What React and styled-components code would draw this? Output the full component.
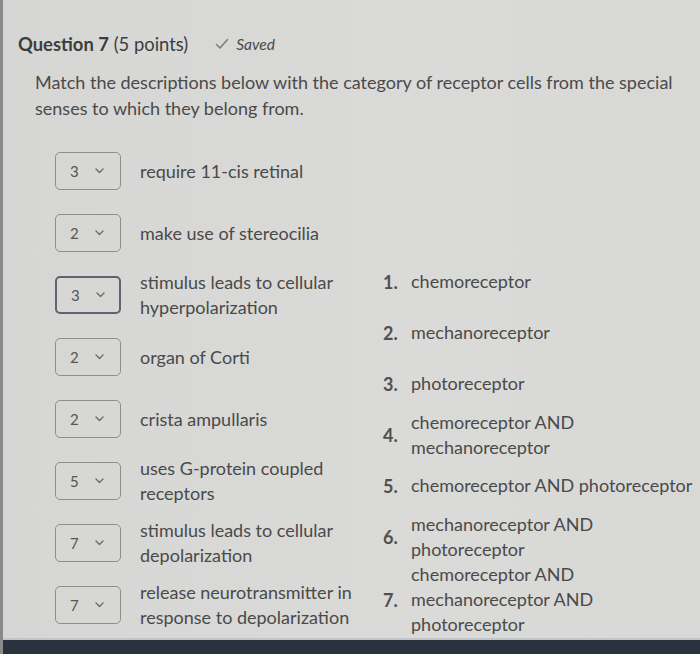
import React from "react";
import styled, { createGlobalStyle } from "styled-components";

const GlobalStyle = createGlobalStyle`
  html, body {
    margin: 0;
    padding: 0;
    background: #d7d7d5;
  }
  * { box-sizing: border-box; }
`;

const rows = [
  { value: "3", text: "require 11-cis retinal" },
  { value: "2", text: "make use of stereocilia" },
  { value: "3", text: "stimulus leads to cellular hyperpolarization", focused: true },
  { value: "2", text: "organ of Corti" },
  { value: "2", text: "crista ampullaris" },
  { value: "5", text: "uses G-protein coupled receptors" },
  { value: "7", text: "stimulus leads to cellular depolarization" },
  { value: "7", text: "release neurotransmitter in response to depolarization" },
];

const choices = [
  "chemoreceptor",
  "mechanoreceptor",
  "photoreceptor",
  "chemoreceptor AND mechanoreceptor",
  "chemoreceptor AND photoreceptor",
  "mechanoreceptor AND photoreceptor",
  "chemoreceptor AND mechanoreceptor AND photoreceptor",
];

export default function App() {
  return (
    <>
      <GlobalStyle />
      <Page>
        <Content>
          <Header>
            <Title>
              <b>Question 7</b> (5 points)
            </Title>
            <SavedTag>
              <svg width="14" height="12" viewBox="0 0 14 12">
                <polyline
                  points="1.5,6.5 5,10 12.5,1.5"
                  fill="none"
                  stroke="#7d7d7d"
                  strokeWidth="1.6"
                  strokeLinecap="round"
                  strokeLinejoin="round"
                />
              </svg>
              <span>Saved</span>
            </SavedTag>
          </Header>

          <Prompt>
            Match the descriptions below with the category of receptor cells from the special
            senses to which they belong from.
          </Prompt>

          <MatchArea>
            <LeftList>
              {rows.map((r, i) => (
                <Row key={i}>
                  <Select $focused={r.focused}>
                    <span>{r.value}</span>
                    <svg width="9" height="6" viewBox="0 0 9 6">
                      <polyline
                        points="1,1 4.5,4.5 8,1"
                        fill="none"
                        stroke="#6a6a6a"
                        strokeWidth="1.4"
                        strokeLinecap="round"
                        strokeLinejoin="round"
                      />
                    </svg>
                  </Select>
                  <Description>{r.text}</Description>
                </Row>
              ))}
            </LeftList>

            <ChoiceList>
              {choices.map((c, i) => (
                <Choice key={i}>
                  <Num>{i + 1}.</Num>
                  <ChoiceText>{c}</ChoiceText>
                </Choice>
              ))}
            </ChoiceList>
          </MatchArea>
        </Content>
        <BottomBar />
      </Page>
    </>
  );
}

const Page = styled.div`
  width: 700px;
  height: 654px;
  overflow: hidden;
  display: flex;
  flex-direction: column;
  border-left: 3px solid #8a8a8a;
  background: linear-gradient(90deg, #d6d6d4 0%, #dadad8 60%, #d8d8d6 100%);
  font-family: Lato, "Open Sans", sans-serif;
  color: #4a4a4a;
`;

const Content = styled.div`
  flex: 1;
  overflow: hidden;
  padding: 33px 0 0 15px;
`;

const Header = styled.div`
  display: flex;
  align-items: center;
  gap: 27px;
`;

const Title = styled.div`
  font-size: 18.4px;
  color: #3d3d3d;
  b {
    font-weight: 700;
  }
`;

const SavedTag = styled.div`
  display: flex;
  align-items: center;
  gap: 7px;
  font-size: 15.5px;
  font-style: italic;
  color: #4a4a4a;
`;

const Prompt = styled.p`
  margin: 14px 0 0 17px;
  font-size: 18px;
  line-height: 26px;
  max-width: 660px;
  color: #4a4a4a;
`;

const MatchArea = styled.div`
  display: flex;
  margin-left: 37px;
  margin-top: 19px;
`;

const LeftList = styled.div`
  width: 328px;
  flex: none;
  display: flex;
  flex-direction: column;
`;

const Row = styled.div`
  height: 62px;
  display: flex;
  align-items: center;
  gap: 19px;
`;

const Select = styled.div`
  flex: none;
  width: 66px;
  height: 38px;
  display: flex;
  align-items: center;
  gap: 16px;
  padding-left: 14px;
  border: ${(p) => (p.$focused ? "2px solid #5d6472" : "1px solid #8e8e8e")};
  border-radius: 5px;
  font-size: 15px;
  color: #555;
`;

const Description = styled.div`
  max-width: 225px;
  font-size: 18px;
  line-height: 25px;
`;

const ChoiceList = styled.div`
  display: flex;
  flex-direction: column;
  margin-top: 116px;
`;

const Choice = styled.div`
  min-height: 51px;
  display: flex;
  align-items: center;
`;

const Num = styled.div`
  flex: none;
  width: 28px;
  font-size: 18px;
  font-weight: 700;
  color: #505050;
`;

const ChoiceText = styled.div`
  max-width: 288px;
  font-size: 18px;
  line-height: 25px;
`;

const BottomBar = styled.div`
  flex: none;
  height: 16px;
  background: #29323d;
  border-top: 2px solid #c2c5c8;
`;
